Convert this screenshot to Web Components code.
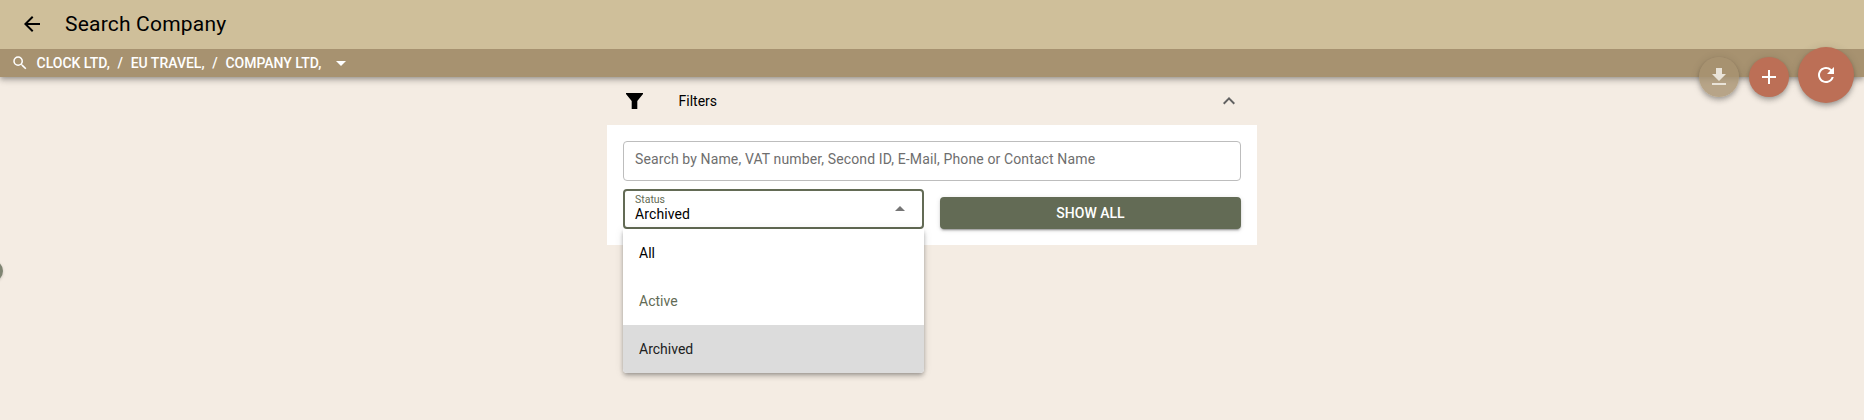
<!DOCTYPE html>
<html>
<head>
<meta charset="utf-8">
<title>Search Company</title>
<style>
  body{margin:0;background:#f4ece3;font-family:Roboto,sans-serif;overflow:hidden;height:420px;position:relative}
</style>
</head>
<body>
<app-header title="Search Company">
  <span>CLOCK LTD,</span><span>EU TRAVEL,</span><span>COMPANY LTD,</span>
</app-header>
<fab-group></fab-group>
<filter-panel></filter-panel>
<side-handle></side-handle>
<script>
(function () {
  class AppHeader extends HTMLElement {
    connectedCallback() {
      const s = this.attachShadow({ mode: 'open' });
      s.innerHTML = `
        <style>
          :host{display:block;position:relative;z-index:1;box-shadow:0 2px 4px -1px rgba(0,0,0,.2),0 4px 5px 0 rgba(0,0,0,.14),0 1px 10px 0 rgba(0,0,0,.12)}
          .top{box-sizing:border-box;height:49px;background:#cfbf9a;display:flex;align-items:center;padding:0 0 1px 20px;gap:21px}
          .top svg{display:block;width:24px;height:24px;fill:#000}
          h1{margin:0;font:400 21px Roboto,sans-serif;letter-spacing:.2px;color:#000}
          .crumbs{height:28px;background:#a79270;display:flex;align-items:center;padding-left:10.5px;color:#fff;font:500 14px Roboto,sans-serif}
          .crumbs svg.s{width:18px;height:18px;fill:#fff;margin-right:8px}
          .crumbs svg.d{width:24px;height:24px;fill:#fff;margin-left:8px}
          ::slotted(span){white-space:nowrap}
          ::slotted(span:not(:last-child))::after{content:"/";margin:0 7.7px}
        </style>
        <div class="top">
          <svg viewBox="0 0 24 24"><path d="M20 11H7.83l5.59-5.59L12 4l-8 8 8 8 1.41-1.41L7.83 13H20z"/></svg>
          <h1>${this.getAttribute('title')}</h1>
        </div>
        <div class="crumbs">
          <svg class="s" viewBox="0 0 24 24"><path d="M15.5 14h-.79l-.28-.27A6.47 6.47 0 0 0 16 9.5 6.5 6.5 0 1 0 9.5 16c1.61 0 3.09-.59 4.23-1.57l.27.28v.79l5 4.99L20.49 19l-4.99-5zm-6 0C7.01 14 5 11.99 5 9.5S7.01 5 9.5 5 14 7.01 14 9.5 11.99 14 9.5 14z"/></svg>
          <slot></slot>
          <svg class="d" viewBox="0 0 24 24"><path d="M7 10l5 5 5-5z"/></svg>
        </div>`;
    }
  }
  customElements.define('app-header', AppHeader);

  class FabGroup extends HTMLElement {
    connectedCallback() {
      const s = this.attachShadow({ mode: 'open' });
      s.innerHTML = `
        <style>
          :host{display:flex;position:absolute;z-index:3;top:47px;right:10px;height:56px;align-items:flex-start}
          .f{border-radius:50%;width:40px;height:40px;display:flex;align-items:center;justify-content:center;background:#bc6f56;box-shadow:0 2px 4px -1px rgba(0,0,0,.2),0 4px 5px 0 rgba(0,0,0,.14),0 1px 10px 0 rgba(0,0,0,.12);margin-top:10px}
          .f svg{width:24px;height:24px;fill:#fff}
          .dl{background:rgba(167,146,112,.8);margin-right:10px}
          .dl svg{fill:#e9e3d8}
          .big{width:56px;height:56px;margin:0 0 0 9px}
        </style>
        <div class="f dl"><svg viewBox="0 0 24 24"><path d="M19 9h-4V3H9v6H5l7 7 7-7zM5 18v2h14v-2H5z"/></svg></div>
        <div class="f"><svg viewBox="0 0 24 24"><path d="M19 13h-6v6h-2v-6H5v-2h6V5h2v6h6v2z"/></svg></div>
        <div class="f big"><svg viewBox="0 0 24 24"><path d="M17.65 6.35A7.958 7.958 0 0 0 12 4c-4.42 0-7.99 3.58-7.99 8s3.57 8 7.99 8c3.73 0 6.84-2.55 7.73-6h-2.08A5.99 5.99 0 0 1 12 18c-3.31 0-6-2.69-6-6s2.69-6 6-6c1.66 0 3.14.69 4.22 1.78L13 11h7V4l-2.35 2.35z"/></svg></div>`;
    }
  }
  customElements.define('fab-group', FabGroup);

  class StatusSelect extends HTMLElement {
    connectedCallback() {
      const s = this.attachShadow({ mode: 'open' });
      s.innerHTML = `
        <style>
          :host{display:block;position:relative;flex:1}
          .box{box-sizing:border-box;height:40px;border:2px solid #636b55;border-radius:4px;padding:3px 10px 0;position:relative;background:#fff}
          .lbl{font-size:10.5px;line-height:11px;color:#636b55}
          .val{font-size:14px;line-height:16px;margin-top:1px;color:#000;letter-spacing:.1px}
          .box svg{position:absolute;right:10px;top:6px;width:24px;height:24px;fill:#757575}
          .menu{position:absolute;left:0;right:0;top:40px;background:#fff;border-radius:0 0 4px 4px;box-shadow:0 2px 4px -1px rgba(0,0,0,.3),0 4px 5px 0 rgba(0,0,0,.1),0 1px 10px 0 rgba(0,0,0,.1);overflow:hidden}
          .i{box-sizing:border-box;height:48px;display:flex;align-items:center;padding:0 16px 1px;font-size:14px;color:#000}
          .i.off{color:#636b55}
          .i.on{background:#dcdcdc;color:#212121}
        </style>
        <div class="box">
          <div class="lbl">Status</div>
          <div class="val">Archived</div>
          <svg viewBox="0 0 24 24"><path d="M7 14l5-5 5 5z"/></svg>
        </div>
        <div class="menu">
          <div class="i">All</div>
          <div class="i off">Active</div>
          <div class="i on">Archived</div>
        </div>`;
    }
  }
  customElements.define('status-select', StatusSelect);

  class FilterPanel extends HTMLElement {
    connectedCallback() {
      const s = this.attachShadow({ mode: 'open' });
      s.innerHTML = `
        <style>
          :host{display:block;width:650px;margin:0 auto;position:relative;z-index:2}
          .head{height:48px;display:flex;align-items:center;padding:0 16px;font-size:14px;color:#000}
          .head .fi{width:24px;height:24px;fill:#000;margin-right:31.5px}
          .head span{flex:1}
          .head .ch{width:24px;height:24px;fill:#616161}
          .body{background:#fff;padding:16px;display:flex;flex-direction:column;gap:8px;height:120px;box-sizing:border-box}
          .search{box-sizing:border-box;height:40px;border:1px solid #bdbdbd;border-radius:4px;padding:0 11px 4px;display:flex;align-items:center;font-size:14px;letter-spacing:.125px;color:#6e6e6e}
          .row{display:flex;gap:16px;align-items:flex-end}
          button{flex:1;height:32px;border:0;border-radius:4px;background:#636b55;color:#fff;font:500 14px Roboto,sans-serif;box-shadow:0 3px 1px -2px rgba(0,0,0,.2),0 2px 2px 0 rgba(0,0,0,.14),0 1px 5px 0 rgba(0,0,0,.12);padding:0}
        </style>
        <div class="head">
          <svg class="fi" viewBox="0 0 24 24"><path d="M3 4h17v1l-5.700 7v8H8.700v-8L3 5z"/></svg>
          <span>Filters</span>
          <svg class="ch" viewBox="0 0 24 24"><path d="M12 8l-6 6 1.41 1.41L12 10.83l4.59 4.58L18 14z"/></svg>
        </div>
        <div class="body">
          <div class="search">Search by Name, VAT number, Second ID, E-Mail, Phone or Contact Name</div>
          <div class="row">
            <status-select></status-select>
            <button>SHOW ALL</button>
          </div>
        </div>`;
    }
  }
  customElements.define('filter-panel', FilterPanel);

  class SideHandle extends HTMLElement {
    connectedCallback() {
      const s = this.attachShadow({ mode: 'open' });
      s.innerHTML = `<style>:host{display:block;position:absolute;left:-19px;top:260px;width:22px;height:22px;border-radius:50%;background:#7f8472;box-shadow:0 1px 3px rgba(0,0,0,.15)}</style>`;
    }
  }
  customElements.define('side-handle', SideHandle);
})();
</script>
</body>
</html>
